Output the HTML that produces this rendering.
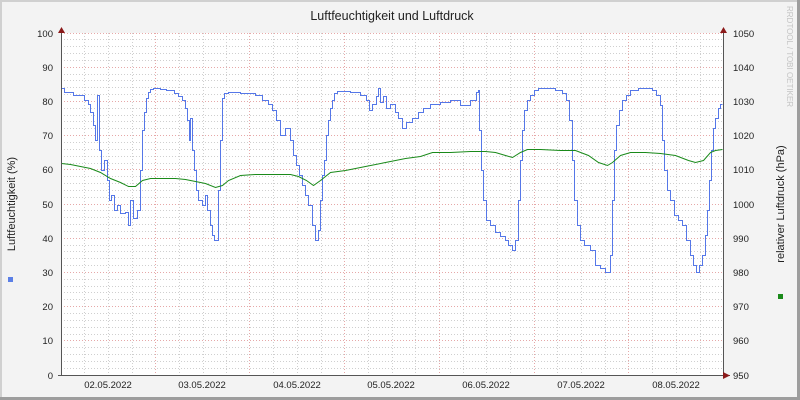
<!DOCTYPE html>
<html><head><meta charset="utf-8"><style>
body{margin:0;background:#f3f3f3;}
svg{display:block;font-family:"Liberation Sans","DejaVu Sans",sans-serif;}
</style></head><body>
<svg width="800" height="400" viewBox="0 0 800 400">
<rect x="0" y="0" width="800" height="400" fill="#f3f3f3"/>
<rect x="0" y="0" width="800" height="2" fill="#d0d0d0"/>
<rect x="0" y="0" width="2" height="400" fill="#d0d0d0"/>
<rect x="797" y="0" width="3" height="400" fill="#9d9d9d"/>
<rect x="0" y="397" width="800" height="3" fill="#9d9d9d"/>
<rect x="61" y="33" width="662" height="342" fill="#fff"/>
<g stroke="#cfcfcf" stroke-width="1" stroke-dasharray="1,2">
<path d="M61 368.5H723M61 361.5H723M61 354.5H723M61 347.5H723M61 334.5H723M61 327.5H723M61 320.5H723M61 313.5H723M61 299.5H723M61 292.5H723M61 286.5H723M61 279.5H723M61 265.5H723M61 258.5H723M61 251.5H723M61 245.5H723M61 231.5H723M61 224.5H723M61 217.5H723M61 210.5H723M61 197.5H723M61 190.5H723M61 183.5H723M61 176.5H723M61 163.5H723M61 156.5H723M61 149.5H723M61 142.5H723M61 128.5H723M61 121.5H723M61 115.5H723M61 108.5H723M61 94.5H723M61 87.5H723M61 80.5H723M61 74.5H723M61 60.5H723M61 53.5H723M61 46.5H723M61 39.5H723"/>
<path d="M84.5 33V375M108.5 33V375M132.5 33V375M179.5 33V375M203.5 33V375M226.5 33V375M273.5 33V375M297.5 33V375M321.5 33V375M368.5 33V375M392.5 33V375M415.5 33V375M463.5 33V375M486.5 33V375M510.5 33V375M557.5 33V375M581.5 33V375M605.5 33V375M652.5 33V375M676.5 33V375M700.5 33V375"/>
</g>
<g stroke="#e6a8a8" stroke-width="1" stroke-dasharray="1,2">
<path d="M61 340.5H723M61 306.5H723M61 272.5H723M61 238.5H723M61 204.5H723M61 169.5H723M61 135.5H723M61 101.5H723M61 67.5H723M61 33.5H723"/>
<path d="M155.5 33V375M249.5 33V375M344.5 33V375M439.5 33V375M534.5 33V375M628.5 33V375"/>
</g>
<g transform="translate(0.5,0.5)">
<polyline fill="none" stroke="#5577e8" stroke-width="1" points="61,88 64,88 64,92 73,92 73,95 84,95 84,100 88,100 88,104 90,104 90,112 93,112 93,125 95,125 95,140 97,140 97,95 99,95 99,150 101,150 101,170 104,170 104,160 107,160 107,180 109,180 109,200 111,200 111,195 114,195 114,210 117,210 117,205 120,205 120,213 125,213 125,212 128,212 128,225 130,225 130,200 133,200 133,218 137,218 137,210 140,210 140,170 142,170 142,130 144,130 144,112 146,112 146,98 148,98 148,92 150,92 150,89 153,89 153,88 160,88 160,89 166,89 166,90 174,90 174,93 178,93 178,96 182,96 182,100 185,100 185,108 187,108 187,120 189,120 189,140 190,140 190,118 192,118 192,150 194,150 194,170 196,170 196,190 198,190 198,200 202,200 202,205 205,205 205,195 207,195 207,210 210,210 210,225 212,225 212,235 214,235 214,240 218,240 218,190 220,190 220,140 222,140 222,98 224,98 224,93 228,93 228,92 240,92 240,93 255,93 255,95 262,95 262,100 268,100 268,104 272,104 272,110 276,110 276,120 280,120 280,135 285,135 285,128 290,128 290,140 293,140 293,155 296,155 296,165 299,165 299,175 302,175 302,185 305,185 305,195 308,195 308,205 312,205 312,225 315,225 315,240 318,240 318,230 320,230 320,200 322,200 322,175 324,175 324,160 326,160 326,135 328,135 328,120 330,120 330,108 332,108 332,100 334,100 334,93 337,93 337,91 350,91 350,92 360,92 360,95 366,95 366,100 369,100 369,110 372,110 372,104 376,104 376,96 378,96 378,88 380,88 380,102 383,102 383,96 386,96 386,108 390,108 390,104 395,104 395,112 398,112 398,118 402,118 402,128 406,128 406,122 412,122 412,118 418,118 418,112 423,112 423,108 430,108 430,104 440,104 440,102 450,102 450,100 460,100 460,105 470,105 470,100 476,100 476,92 478,92 478,90 479,90 479,130 481,130 481,170 483,170 483,200 486,200 486,220 490,220 490,225 495,225 495,232 500,232 500,236 505,236 505,240 508,240 508,245 512,245 512,250 515,250 515,240 518,240 518,200 520,200 520,160 522,160 522,130 524,130 524,110 527,110 527,100 530,100 530,95 534,95 534,90 538,90 538,88 555,88 555,90 562,90 562,93 566,93 566,100 569,100 569,120 572,120 572,160 574,160 574,200 577,200 577,225 580,225 580,240 584,240 584,245 590,245 590,250 595,250 595,265 600,265 600,268 605,268 605,272 610,272 610,255 612,255 612,200 614,200 614,150 616,150 616,125 619,125 619,110 622,110 622,100 626,100 626,95 630,95 630,90 638,90 638,88 652,88 652,90 656,90 656,95 660,95 660,105 662,105 662,140 664,140 664,170 667,170 667,190 670,190 670,200 674,200 674,215 678,215 678,220 682,220 682,225 686,225 686,240 690,240 690,255 693,255 693,265 696,265 696,272 699,272 699,265 702,265 702,255 705,255 705,235 707,235 707,210 709,210 709,180 711,180 711,150 713,150 713,128 715,128 715,118 718,118 718,108 720,108 720,104 722,104"/>
<polyline fill="none" stroke="#1a8a1a" stroke-width="1" points="61,163 70,164 80,166 90,168 100,172 110,178 120,182 128,186 135,186 142,180 150,178 160,178 175,178 185,179 195,181 205,183 215,187 222,185 228,180 240,175 255,174 275,174 290,174 298,176 306,180 313,185 320,180 330,172 345,170 365,166 385,162 405,158 420,156 432,152 450,152 470,151 485,151 495,152 505,155 512,157 520,152 527,149 540,149 560,150 575,150 588,155 598,162 607,165 612,162 620,155 630,152 645,152 660,153 675,155 688,160 695,162 703,160 710,152 715,150 722,149"/>
</g>
<path d="M61.5 31V376M723.5 31V376M58 375.5H730" stroke="#555" stroke-width="1" fill="none"/>
<path d="M58 33l3.5-6 3.5 6zM720 33l3.5-6 3.5 6zM723 372l7 3.5-7 3.5z" fill="#8b1a1a"/>
<g font-size="9.5" fill="#222" text-anchor="end">
<text x="53" y="37">100</text><text x="53" y="71">90</text><text x="53" y="105">80</text><text x="53" y="139">70</text><text x="53" y="173">60</text><text x="53" y="208">50</text><text x="53" y="242">40</text><text x="53" y="276">30</text><text x="53" y="310">20</text><text x="53" y="344">10</text><text x="53" y="379">0</text>
</g>
<g font-size="9.5" fill="#222">
<text x="733" y="37">1050</text><text x="733" y="71">1040</text><text x="733" y="105">1030</text><text x="733" y="139">1020</text><text x="733" y="173">1010</text><text x="733" y="208">1000</text><text x="733" y="242">990</text><text x="733" y="276">980</text><text x="733" y="310">970</text><text x="733" y="344">960</text><text x="733" y="379">950</text>
</g>
<g font-size="9.5" fill="#222" text-anchor="middle">
<text x="108" y="388">02.05.2022</text><text x="202" y="388">03.05.2022</text><text x="297" y="388">04.05.2022</text><text x="391" y="388">05.05.2022</text><text x="486" y="388">06.05.2022</text><text x="581" y="388">07.05.2022</text><text x="676" y="388">08.05.2022</text>
</g>
<text x="392" y="20" font-size="12.5" fill="#222" text-anchor="middle">Luftfeuchtigkeit und Luftdruck</text>
<text transform="translate(15,204) rotate(-90)" font-size="11" fill="#222" text-anchor="middle">Luftfeuchtigkeit (%)</text>
<text transform="translate(784,204) rotate(-90)" font-size="11" fill="#222" text-anchor="middle">relativer Luftdruck (hPa)</text>
<text transform="translate(787,6) rotate(90)" font-size="8" fill="#c4c4c4">RRDTOOL / TOBI OETIKER</text>
<rect x="8" y="277" width="5" height="5" fill="#5b7fe6"/>
<rect x="778" y="294" width="5" height="5" fill="#1a8a1a"/>
</svg>
</body></html>
